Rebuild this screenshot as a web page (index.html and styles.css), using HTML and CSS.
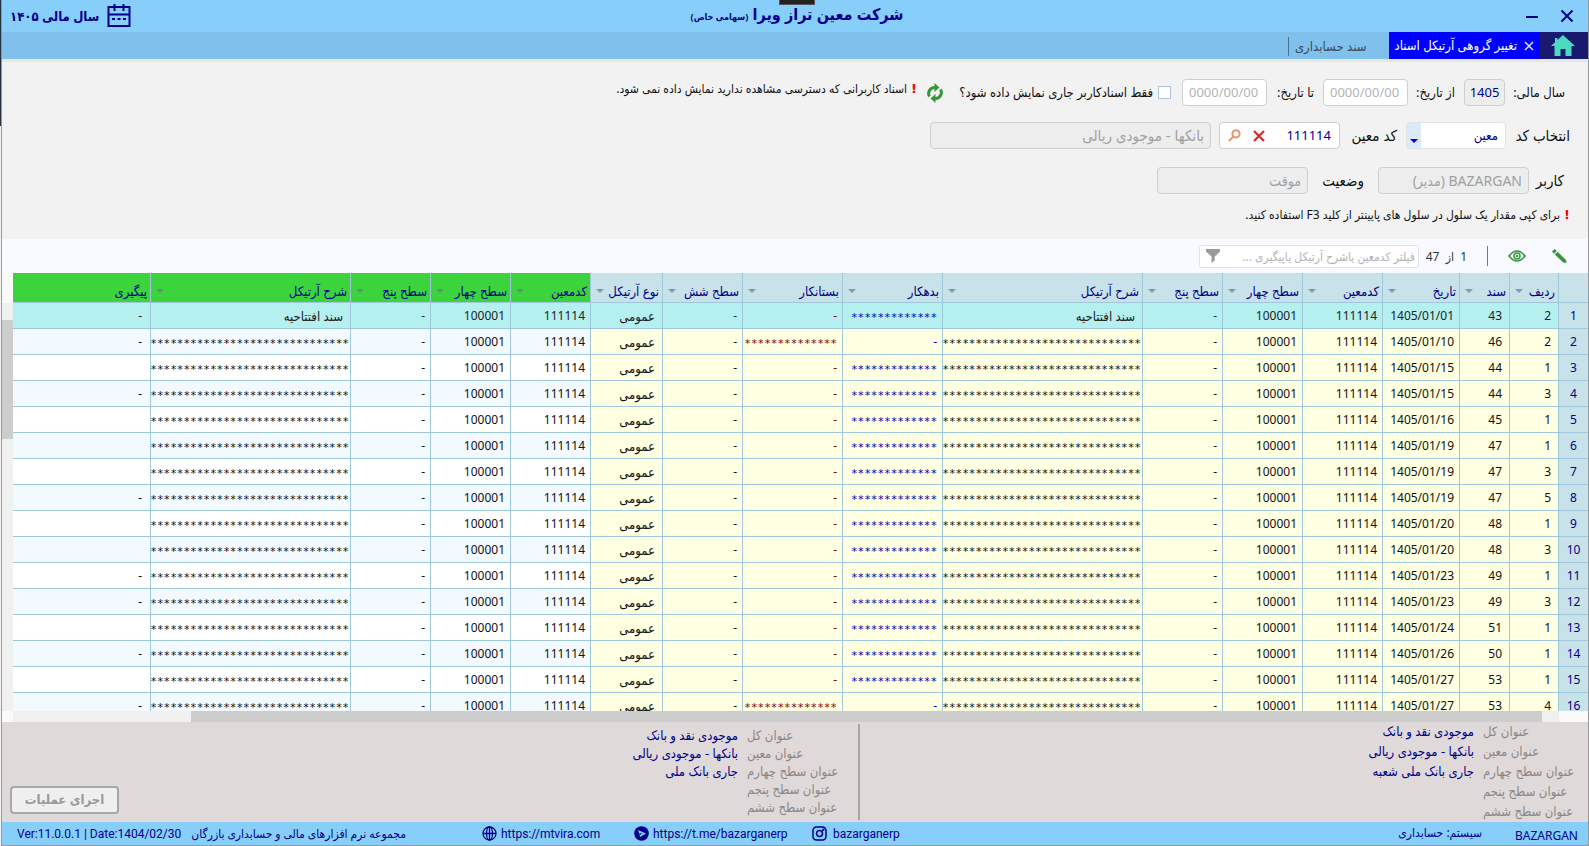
FILE: index.html
```html
<!DOCTYPE html>
<html lang="fa" dir="rtl">
<head>
<meta charset="utf-8">
<title>تغییر گروهی آرتیکل اسناد</title>
<link rel="stylesheet" href="styles.css">
</head>
<body>
<div class="window">
  <header class="titlebar">
    <div class="window-buttons">
      <button class="icon-button" aria-label="بستن"><svg width="14" height="14" viewBox="0 0 14 14"><path d="M1.5 1.5l11 11M12.500 1.500l-11 11" stroke="#00008b" stroke-width="2" fill="none"/></svg></button>
      <button class="icon-button" aria-label="کوچک کردن"><svg width="12" height="14" viewBox="0 0 12 14"><path d="M0 8h12" stroke="#00008b" stroke-width="2"/></svg></button>
    </div>
    <h1 class="company">شرکت معین تراز ویرا <small>(سهامی خاص)</small></h1>
    <div class="fiscal">
      <svg width="24" height="24" viewBox="0 0 24 24" fill="none" stroke="#00008b" stroke-width="2"><rect x="1.500" y="3" width="21" height="19"/><path d="M1 10.500h22M7.500 0v7M16.500 0v7"/><path d="M5 15h3M10.500 15h3M16 15h3"/></svg>
      <span>سال مالی ۱۴۰۵</span>
    </div>
    <span class="notch"></span>
  </header>

  <nav class="tabs">
    <a class="home" href="#" aria-label="خانه"><svg width="24" height="22" viewBox="0 0 24 22"><path d="M12 0L24 11H20.500V21H14.500V14H9.500V21H3.500V11H0L4 7.300V3h2.500v2z" fill="#4adcc0"/></svg></a>
    <div class="tab tab-active">
      <button class="icon-button" aria-label="بستن زبانه"><svg width="10" height="10" viewBox="0 0 10 10"><path d="M1 1l8 8M9 1l-8 8" stroke="#dfe6ff" stroke-width="1.500"/></svg></button>
      <a href="#">تغییر گروهی آرتیکل اسناد</a>
    </div>
    <div class="tab"><a href="#">سند حسابداری</a></div>
  </nav>

  <form class="filters">
    <div class="form-row">
      <label class="label-year" for="year">سال مالی:</label>
      <input class="field year" id="year" value="1405" readonly>
      <label class="label-date" for="from">از تاریخ:</label>
      <input class="field date" id="from" placeholder="0000/00/00">
      <label class="label-date" for="to">تا تاریخ:</label>
      <input class="field date" id="to" placeholder="0000/00/00">
      <span class="check"><input type="checkbox" id="mine"><label for="mine">فقط اسنادکاربر جاری نمایش داده شود؟</label></span>
      <button type="button" class="icon-button refresh" aria-label="بازخوانی"><svg width="16" height="20" viewBox="0 0 16 20" fill="none"><path d="M2.500 13.500A6 6 0 0 1 7 4.500h2M13.500 6.500A6 6 0 0 1 9 15.500H7" stroke="#36973a" stroke-width="3"/><path d="M7.500 0l5 4.500-5 4.500zM8.500 11l-5 4.500 5 4.500z" fill="#36973a"/></svg></button>
      <span class="note note-raised"><b>!</b>اسناد کاربرانی که دسترسی مشاهده ندارید نمایش داده نمی شود.</span>
    </div>
    <div class="form-row">
      <label class="label-code" for="kind">انتخاب کد</label>
      <span class="select"><select id="kind"><option>معین</option></select><svg width="8" height="4" viewBox="0 0 8 4"><path d="M0 0h8L4 4z" fill="#0000e6"/></svg></span>
      <label class="label-moein" for="code">کد معین</label>
      <span class="field code">
        <input id="code" value="111114">
        <button type="button" class="icon-button" aria-label="پاک کردن"><svg width="12" height="12" viewBox="0 0 12 12"><path d="M1 1l10 10M11 1L1 11" stroke="#dc2626" stroke-width="2.200"/></svg></button>
        <button type="button" class="icon-button" aria-label="جستجو"><svg width="13" height="13" viewBox="0 0 13 13" fill="none" stroke="#e3956f" stroke-width="2"><circle cx="8" cy="4.800" r="3.600"/><path d="M5.200 7.600L1 12"/></svg></button>
      </span>
      <input class="field account" aria-label="نام حساب" value="بانکها - موجودی ریالی" disabled>
    </div>
    <div class="form-row form-row-user">
      <label class="label-user" for="user">کاربر</label>
      <input class="field person" id="user" value="BAZARGAN (مدیر)" disabled>
      <label class="label-state" for="state">وضعیت</label>
      <input class="field person" id="state" value="موقت" disabled>
    </div>
    <p class="note note-help"><b>!</b>برای کپی مقدار یک سلول در سلول های پایینتر از کلید F3 استفاده کنید.</p>
  </form>

  <div class="toolbar">
    <button class="icon-button" aria-label="ویرایش"><svg width="16" height="16" viewBox="0 0 16 16" fill="#36973a"><path d="M1 3.500L3.800 1 5.800 3 3 5.700zM3.800 6.500L6.600 3.800 15 12l.5 3-3.200-.5z"/></svg></button>
    <button class="icon-button eye" aria-label="نمایش"><svg width="18" height="12" viewBox="0 0 18 12" fill="none" stroke="#36973a"><path d="M1 6Q9-4 17 6Q9 16 1 6z" stroke-width="1.600"/><circle cx="9" cy="6" r="3" stroke-width="1.500"/><circle cx="9" cy="6" r="1.200" fill="#36973a" stroke="none"/></svg></button>
    <span class="separator"></span>
    <span class="counter">1 &nbsp;از &nbsp;47</span>
    <span class="search">
      <input aria-label="فیلتر" placeholder="فیلتر کدمعین یاشرح آرتیکل یاپیگیری ...">
      <svg width="14" height="14" viewBox="0 0 14 14"><path d="M0 0h14v2.500L8.700 7.500v4L5.500 14V7.500L0 2.500z" fill="#999"/></svg>
    </span>
  </div>

  <main class="grid">
    <div class="grid-view">
      <table>
        <colgroup><col class="w30"><col class="w49"><col class="w50"><col class="w77"><col class="w80"><col class="w80"><col class="w80"><col class="w200"><col class="w100"><col class="w100"><col class="w80"><col class="w72"><col class="w80"><col class="w80"><col class="w80"><col class="w200"><col></colgroup>
        <thead><tr id="head"></tr></thead>
        <tbody id="rows"></tbody>
      </table>
    </div>
    <div class="vscroll"><i class="vscroll-head"></i><i class="vscroll-thumb"></i></div>
  </main>
  <div class="hscroll"><i class="hscroll-corner"></i><i class="hscroll-button"></i><i class="hscroll-thumb"></i><i class="hscroll-track"></i><i class="hscroll-end"></i></div>

  <section class="details">
    <dl class="titles titles-main">
      <dt>عنوان کل</dt><dd>موجودی نقد و بانک</dd>
      <dt>عنوان معین</dt><dd>بانکها - موجودی ریالی</dd>
      <dt>عنوان سطح چهارم</dt><dd>جاری بانک ملی شعبه</dd>
      <dt>عنوان سطح پنجم</dt><dd></dd>
      <dt>عنوان سطح ششم</dt><dd></dd>
    </dl>
    <dl class="titles titles-target">
      <dt>عنوان کل</dt><dd>موجودی نقد و بانک</dd>
      <dt>عنوان معین</dt><dd>بانکها - موجودی ریالی</dd>
      <dt>عنوان سطح چهارم</dt><dd>جاری بانک ملی</dd>
      <dt>عنوان سطح پنجم</dt><dd></dd>
      <dt>عنوان سطح ششم</dt><dd></dd>
    </dl>
    <button class="run" disabled>اجرای عملیات</button>
  </section>

  <footer class="statusbar">
    <span class="status-user">BAZARGAN</span>
    <span class="status-system">سیستم: حسابداری</span>
    <div class="status-links" dir="ltr">
      <span class="version">Ver:11.0.0.1 | Date:1404/02/30</span>
      <span class="suite" dir="rtl">مجموعه نرم افزارهای مالی و حسابداری بازرگان</span>
      <a class="web" href="#"><svg width="15" height="15" viewBox="0 0 15 15" fill="none" stroke="#00008b" stroke-width="1.300"><circle cx="7.500" cy="7.500" r="6.500"/><ellipse cx="7.500" cy="7.500" rx="3" ry="6.500"/><path d="M1 7.500h13M7.500 1v13"/></svg>https://mtvira.com</a>
      <a class="telegram" href="#"><svg width="15" height="15" viewBox="0 0 15 15"><circle cx="7.500" cy="7.500" r="7.300" fill="#00008b"/><path d="M4 4l8 3.500-6 3.500-.5-3z" fill="#87cefa"/><path d="M5.500 7.500l3-.5-2.500 2z" fill="#00008b"/></svg>https://t.me/bazarganerp</a>
      <a class="instagram" href="#"><svg width="15" height="15" viewBox="0 0 15 15" fill="none" stroke="#00008b" stroke-width="1.500"><rect x="1" y="1" width="13" height="13" rx="3.500"/><circle cx="7.500" cy="7.500" r="3"/><circle cx="11.300" cy="3.700" r=".5"/></svg>bazarganerp</a>
    </div>
  </footer>
</div>
<script src="app.js"></script>
</body>
</html>
```
FILE: styles.css
```css
* { box-sizing: border-box; }

body {
  margin: 0;
  background: linear-gradient(#26303a 126px, #f4f4f4 126px);
  font-family: "Noto Sans", "DejaVu Sans Condensed", "DejaVu Sans", sans-serif;
  font-size: 12px;
  color: #111;
}

.window {
  display: flex;
  flex-direction: column;
  height: 100vh;
  margin-left: 1px;
  border: solid #999;
  border-width: 0 1px 1px;
  background: #f2f2f2;
  overflow: hidden;
}

a { color: inherit; text-decoration: none; }
svg { display: block; flex: none; }
input, select, button { font: inherit; color: inherit; }

.icon-button {
  display: flex;
  padding: 0;
  border: 0;
  background: none;
}

/* Title bar */
.titlebar {
  position: relative;
  display: grid;
  grid-template-columns: 1fr auto 1fr;
  align-items: center;
  flex: none;
  height: 32px;
  padding: 0 14px 3px 8px;
  background: #87cefa;
  color: #00008b;
}
.window-buttons { display: flex; gap: 22px; }
.company { margin: 0; padding-left: 10px; font-size: 16px; font-weight: 700; line-height: 28px; white-space: nowrap; }
.company small { font-size: 9px; }
.fiscal {
  display: flex;
  justify-content: flex-end;
  align-items: center;
  gap: 8px;
  font-size: 13px;
  font-weight: 700;
}
.notch {
  position: absolute;
  top: 0;
  left: 49%;
  width: 36px;
  height: 5px;
  border: 1px solid #555;
  border-top: 0;
  background: #222;
}

/* Tabs */
.tabs {
  display: flex;
  flex: none;
  height: 30px;
  border-bottom: 3px solid #e6e6e6;
  background: #7fc1ec;
}
.home { display: grid; place-items: center; width: 48px; padding-right: 2px; background: #191970; }
.tab {
  display: flex;
  align-items: center;
  color: #3c4a58;
  font-size: 13px;
  line-height: 18px;
  white-space: nowrap;
}
.tab a { padding-bottom: 2px; }
.tab:not(.tab-active) { margin: 5px 22px 3px 0; padding-left: 6px; border-left: 1px solid #47718f; }
.tab-active { gap: 7px; padding: 0 6px; background: #0000ff; color: #fff; }

/* Filter form */
.filters {
  display: flex;
  flex-direction: column;
  flex: none;
  gap: 16px;
  height: 177px;
  padding: 17px 18px 0;
}
.form-row { display: flex; align-items: center; height: 27px; font-size: 15px; line-height: 20px; white-space: nowrap; }
.form-row label { padding-bottom: 2px; }
.form-row-user { margin-top: 2px; }
.field {
  height: 27px;
  padding: 0 6px 1px;
  border: 1px solid #ccd0d0;
  border-radius: 4px;
  outline: 0;
  background: #fff;
  color: #00008b;
  font-size: 13px;
}
.field:disabled { background: #ededed; color: #a0a0a0; border-color: #cfcfcf; }
::placeholder { color: #b4b4b4; opacity: 1; }
.label-year { width: 65px; padding-right: 5px; font-size: 13px; }
.label-date { width: 56px; padding-right: 9px; font-size: 13px; }
.year { width: 41px; background: #ededed; text-align: center; padding: 0 0 1px; }
.date { width: 85px; direction: ltr; }
.check { display: flex; align-items: center; gap: 5px; width: 224px; margin-right: 11px; font-size: 13px; }
.check input {
  appearance: none;
  width: 13px;
  height: 13px;
  margin: 0;
  border: 1px solid #b0c4de;
  background: #fff;
}
.refresh { margin: 0 4px 0 10px; }
.note { display: flex; align-items: center; gap: 4px; margin: 0; font-size: 12px; white-space: nowrap; }
.note b { color: #f00; font-family: "DejaVu Sans", sans-serif; font-size: 13px; line-height: 16px; }
.note-raised { align-self: flex-start; }
.note-help { margin-top: -4px; }
.label-code { width: 64px; }
.select { position: relative; width: 100px; height: 27px; }
.select select {
  width: 100%;
  height: 100%;
  padding: 0 7px 2px;
  appearance: none;
  border: 1px solid #dde2e6;
  border-radius: 4px;
  background: linear-gradient(90deg, #dce8fc 14px, #fff 14px);
  color: #00008b;
  font-size: 13px;
}
.select svg { position: absolute; left: 4px; bottom: 6px; }
.label-moein { width: 66px; padding-right: 9px; }
.code { display: flex; align-items: center; gap: 12px; width: 121px; padding: 0 8px; }
.code input { flex: 1; min-width: 0; padding: 0 0 2px; border: 0; outline: 0; background: none; }
.account { width: 281px; margin-right: 8px; font-size: 15px; }
.label-user { width: 41px; padding-right: 6px; }
.person { width: 151px; font-size: 14px; }
.label-state { width: 70px; padding-right: 14px; }

/* Grid toolbar */
.toolbar {
  display: flex;
  align-items: center;
  flex: none;
  height: 34px;
  padding: 0 21px;
  background: #f8faff;
}
.eye { margin-right: 25px; }
.separator { width: 1px; height: 20px; margin: 0 20px; background: #777; }
.counter { width: 48px; color: #333; white-space: nowrap; }
.search {
  display: flex;
  align-items: center;
  width: 220px;
  height: 23px;
  padding: 0 3px 0 6px;
  border: 1px solid #e0e3e8;
  border-radius: 3px;
  background: #fff;
}
.search input { flex: 1; min-width: 0; padding: 0; border: 0; outline: 0; background: none; }

/* Grid */
.grid { display: flex; flex: 1; min-height: 0; overflow: hidden; }
.grid-view { flex: 1; min-width: 0; overflow: hidden; background: #fff; }
table { width: 100%; table-layout: fixed; border-collapse: separate; border-spacing: 0; }
th, td {
  overflow: hidden;
  padding: 0 5px 0 6px;
  border-bottom: 1px solid #a0c8dc;
  border-left: 1px solid #a0c8dc;
  text-align: right;
  font-weight: 400;
  white-space: nowrap;
}
th:last-child, td:last-child { border-left: 0; }
td:last-child { padding-right: 8px; }
thead th { height: 30px; padding: 7px 3px 0 4px; background: #c8e2ea; color: #00008b; font-size: 13px; line-height: 20px; }
thead th.target { background: #3cd43c; }
.head-cell { display: flex; justify-content: space-between; align-items: center; }
.head-cell svg { margin-left: 1px; }
td, tbody th { height: 26px; line-height: 20px; }
tbody th { background: #c8e2ea; color: #00008b; text-align: center; padding: 0; }
tbody td { background: #ffffe1; }
tbody tr:nth-child(odd) .target { background: #fff; }
tbody tr:nth-child(even) .target { background: #f2faff; }
tbody tr.current td, tbody tr.current td.target { background: #b5f0f0; color: #222; }
tbody .debit, tbody tr.current td.debit { color: #0000c8; }
tbody .credit, tbody tr.current td.credit { color: #8b0000; }
.line, .doc { padding-right: 7px; }
.mask { font-family: "DejaVu Sans Mono", monospace; font-size: 11px; padding: 4px 5px 0 0; }
.wide.mask { padding-right: 1px; }
.text { padding-right: 7px; font-size: 13px; }
.kind { padding-right: 7px; font-size: 13px; }
.w30 { width: 30px; }
.w49 { width: 49px; }
.w50 { width: 50px; }
.w72 { width: 72px; }
.w77 { width: 77px; }
.w80 { width: 80px; }
.w100 { width: 100px; }
.w200 { width: 200px; }

.vscroll { display: flex; flex-direction: column; width: 11px; background: #f0f0f0; }
.vscroll-head { height: 30px; margin-bottom: 17px; background: #fafafa; }
.vscroll-thumb { height: 119px; background: #cdcdcd; }
.hscroll { display: flex; flex: none; height: 11px; background: #f0f0f0; }
.hscroll-corner { width: 29px; background: #fafafa; }
.hscroll-button { width: 17px; }
.hscroll-thumb { flex: 1; background: #cdcdcd; }
.hscroll-track { width: 178px; }
.hscroll-end { width: 11px; background: #fafafa; }

/* Account titles */
.details {
  display: flex;
  flex: none;
  height: 100px;
  padding-left: 8px;
  background: #dfd9d9;
  white-space: nowrap;
}
.titles {
  display: grid;
  grid-template-columns: 96px 1fr;
  column-gap: 9px;
  align-content: start;
  margin: 0;
  font-size: 13px;
}
.titles dt { color: #8c8686; text-align: left; }
.titles dd { margin: 0; color: #00008b; }
.titles-main { width: 728px; grid-auto-rows: 20px; line-height: 18px; padding-right: 9px; }
.titles-target {
  flex: 1;
  grid-auto-rows: 18px;
  line-height: 16px;
  margin: 2px 0;
  padding: 3px 15px 0 0;
  border-right: 2px solid #aba6a6;
}
.run {
  align-self: flex-end;
  width: 109px;
  height: 28px;
  margin-bottom: 8px;
  padding: 0 0 2px;
  border: 2px solid #a8a8a8;
  border-radius: 4px;
  background: #efefef;
  color: #999;
  font-size: 13px;
  line-height: 20px;
  font-weight: 700;
}

/* Status bar */
.statusbar {
  display: flex;
  align-items: center;
  flex: none;
  height: 23px;
  padding: 0 10px 0 15px;
  background: #87cefa;
  color: #00008b;
  white-space: nowrap;
}
.status-user { width: 96px; padding-top: 3px; }
.status-system { padding-bottom: 3px; }
.status-links {
  display: flex;
  align-items: center;
  margin-right: auto;
  font-family: Roboto, "Noto Sans", "DejaVu Sans Condensed", sans-serif;
}
.status-links a { display: flex; align-items: center; gap: 4px; }
.version { width: 169px; }
.suite { width: 220px; margin-right: 76px; }
.web { width: 152px; }
.telegram { width: 178px; }
.status-links .instagram { gap: 6px; }
```
FILE: app.js
```js
const heads = ["", "ردیف", "سند", "تاریخ", "کدمعین", "سطح چهار", "سطح پنج", "شرح آرتیکل", "بدهکار",
  "بستانکار", "سطح شش", "نوع آرتیکل", "کدمعین", "سطح چهار", "سطح پنج", "شرح آرتیکل", "پیگیری"];
const firstTarget = 12;
const arrow = '<svg width="8" height="4" viewBox="0 0 8 4"><path d="M0 0h8L4 4z" fill="#5f7f9f" fill-opacity=".7"/></svg>';

document.getElementById("head").innerHTML = heads.map((h, i) => {
  const mark = i > 0 && i < 16 ? arrow : "";
  return `<th class="${i >= firstTarget ? "target" : ""}"><div class="head-cell"><span>${h}</span>${mark}</div></th>`;
}).join("");

// row number in document, document, day, tracking cell
const data = [
  [2, 43, "01", "-"], [2, 46, "10", "-"], [1, 44, "15", ""], [3, 44, "15", "-"],
  [1, 45, "16", ""], [1, 47, "19", ""], [3, 47, "19", ""], [5, 47, "19", "-"],
  [1, 48, "20", ""], [3, 48, "20", ""], [1, 49, "23", "-"], [3, 49, "23", "-"],
  [1, 51, "24", ""], [1, 50, "26", "-"], [1, 53, "27", ""], [4, 53, "27", "-"]
];
const stars = n => "*".repeat(n);

document.getElementById("rows").innerHTML = data.map(([line, doc, day, track], i) => {
  const opening = i === 0;
  const credited = i === 1 || i === 15;
  const text = opening ? "سند افتتاحیه" : stars(30);
  const textClass = opening ? "text" : "wide mask";
  return `<tr class="${opening ? "current" : ""}"><th>${i + 1}</th><td class="line">${line}</td><td class="doc">${doc}</td>` +
    `<td>1405/01/${day}</td><td>111114</td><td>100001</td><td>-</td><td class="${textClass}">${text}</td>` +
    `<td class="debit ${credited ? "" : "mask"}">${credited ? "-" : stars(13)}</td>` +
    `<td class="credit ${credited ? "mask" : ""}">${credited ? stars(14) : "-"}</td>` +
    `<td>-</td><td class="kind">عمومی</td><td class="target">111114</td><td class="target">100001</td>` +
    `<td class="target">-</td><td class="target ${textClass}">${text}</td><td class="target">${track}</td></tr>`;
}).join("");
```
